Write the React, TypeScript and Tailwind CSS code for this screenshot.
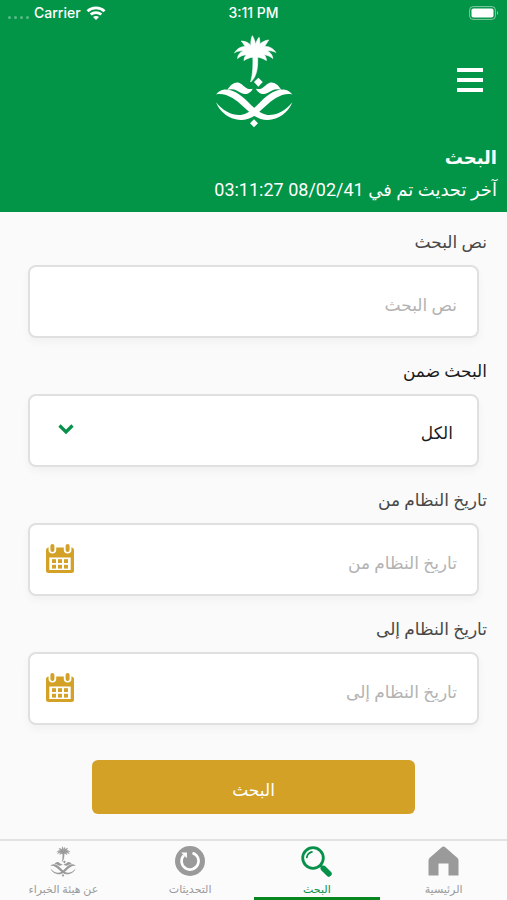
import type { ReactNode } from "react"

function Emblem({ className }: { className?: string }) {
  return (
    <svg viewBox="30 18 232 280" className={className} fill="currentColor" aria-hidden="true">
      {/* palm */}
      <g stroke="currentColor" strokeWidth="2" strokeLinejoin="round">
        <path d="M142 76 L156 76 C159 112 156 144 136 161 C143 138 144 108 142 76Z" />
        <path d="M149 86 C134 66 134 40 141 23 C150 38 156 60 149 86Z" />
        <path d="M149 86 C146 62 151 40 161 28 C167 46 162 68 149 86Z" />
        <path d="M149 84 C152 54 168 38 190 36 C182 46 174 68 149 84Z" />
        <path d="M149 84 C146 54 130 40 108 39 C117 48 124 68 149 84Z" />
        <path d="M146 80 C160 50 194 47 211 73 C196 64 172 66 152 88Z" />
        <path d="M152 80 C138 50 105 47 88 74 C103 64 126 66 147 88Z" />
        <path d="M148 74 C172 58 200 68 202 91 C190 80 172 76 150 84Z" />
        <path d="M150 74 C127 58 99 68 97 91 C108 80 127 76 149 84Z" />
        <path d="M148 72 C168 70 183 80 183 97 C174 90 162 88 148 84Z" />
        <path d="M151 72 C131 70 117 80 116 97 C125 90 137 88 151 84Z" />
      </g>
      {/* diamonds */}
      <path d="M159 148 L172 161 L159 175 L146 161Z" />
      <path d="M146 272 L158 284 L146 296 L134 284Z" />
      {/* crossed swords */}
      <path d="M33 221 C54 248 82 261 107 259 C129 256 149 237 167 218 C190 195 210 183 234 183 C246 184 255 190 260 198 C245 194 227 199 211 209 C191 221 171 244 151 259 C131 273 111 277 91 272 C62 264 42 245 33 221Z" />
      <path d="M260 221 C239 248 211 261 186 259 C164 256 144 237 126 218 C103 195 83 183 59 183 C47 184 38 190 33 198 C48 194 66 199 82 209 C102 221 122 244 142 259 C162 273 182 277 202 272 C231 264 251 245 260 221Z" />
      <path d="M66 185 C76 169 88 160 101 163 C115 168 123 187 142 181 C137 194 122 201 108 194 C95 187 85 179 66 185Z" />
      <path d="M228 185 C218 169 206 160 193 163 C179 168 171 187 152 181 C157 194 172 201 186 194 C199 187 209 179 228 185Z" />
    </svg>
  )
}

function WifiIcon() {
  return (
    <svg viewBox="0 0 20 15" className="h-[15px] w-5" fill="none" stroke="currentColor" aria-hidden="true">
      <path d="M1.500 5.200 C6.200 .8 13.800 .8 18.500 5.200" strokeWidth="2.800" />
      <path d="M4.700 8.600 C7.600 5.900 12.400 5.900 15.300 8.600" strokeWidth="2.700" />
      <path d="M10 14 L7 11 C8.700 9.500 11.300 9.500 13 11Z" fill="currentColor" stroke="none" />
    </svg>
  )
}

function BatteryIcon() {
  return (
    <svg viewBox="0 0 30 14" className="h-[14px] w-[30px]" aria-hidden="true">
      <rect x=".6" y=".6" width="25.800" height="12.800" rx="3.500" fill="none" stroke="#fff" strokeOpacity=".5" />
      <rect x="2.500" y="2.500" width="22" height="9" rx="1.800" fill="#fff" />
      <path d="M28 5 C29.600 5.700 29.600 8.300 28 9Z" fill="#fff" fillOpacity=".5" />
    </svg>
  )
}

function CalendarIcon() {
  return (
    <svg viewBox="0 0 28 29" className="h-[29px] w-7" aria-hidden="true">
      <path d="M2 3.500 H26 Q28 4 28 6 V26.500 Q28 29 25.500 29 H2.500 Q0 29 0 26.500 V6 Q0 4 2 3.500Z" fill="#d4a127" />
      <rect x="3.300" y="13.500" width="21.400" height="12.500" fill="#fff" />
      <rect x="2.600" y="-3" width="7.600" height="12.600" rx="3.800" fill="#fff" />
      <rect x="17.800" y="-3" width="7.600" height="12.600" rx="3.800" fill="#fff" />
      <rect x="4.400" y="0" width="4" height="8" rx="2" fill="#d4a127" />
      <rect x="19.600" y="0" width="4" height="8" rx="2" fill="#d4a127" />
      <g fill="#d4a127">
        <rect x="6" y="15.200" width="4" height="3.800" />
        <rect x="12" y="15.200" width="4" height="3.800" />
        <rect x="18" y="15.200" width="4" height="3.800" />
        <rect x="6" y="20.800" width="4" height="3.800" />
        <rect x="12" y="20.800" width="4" height="3.800" />
        <rect x="18" y="20.800" width="4" height="3.800" />
      </g>
    </svg>
  )
}

function HomeIcon() {
  return (
    <svg viewBox="0 0 31 30" className="h-[30px] w-[31px]" fill="currentColor" aria-hidden="true">
      <path d="M15.500 .5 Q16.500 .5 17.500 1.500 L29.500 12 Q30.500 13 30.500 14.500 V29.500 H20.500 V17.500 H10.500 V29.500 H.5 V14.500 Q.5 13 1.500 12 L13.500 1.500 Q14.500 .5 15.500 .5Z" />
    </svg>
  )
}

function SearchIcon() {
  return (
    <svg viewBox="0 0 31 31" className="h-[31px] w-[31px]" fill="none" stroke="currentColor" aria-hidden="true">
      <circle cx="12" cy="12" r="10.300" strokeWidth="2.800" />
      <path d="M5.800 11.500 Q6.500 7 11 5.900" strokeWidth="1.700" strokeLinecap="round" />
      <path d="M19 19 L22 22" strokeWidth="2.500" />
      <path d="M22.500 22.500 L27.800 27.800" strokeWidth="5.800" strokeLinecap="round" />
    </svg>
  )
}

function UpdatesIcon() {
  return (
    <svg viewBox="0 0 30 30" className="h-[30px] w-[30px]" aria-hidden="true">
      <circle cx="15" cy="15" r="15" fill="currentColor" />
      <path d="M17.500 6.900 A8.500 8.500 0 1 1 8.800 9.300" fill="none" stroke="#fff" strokeWidth="2.600" />
      <path d="M6.200 6.600 L12 6.400 L11.800 12.200Z" fill="#fff" />
    </svg>
  )
}

const fieldBox =
  "flex h-[73px] w-full items-center rounded-lg border-2 border-[#e0e0e0] bg-white shadow-[0_4px_8px_rgba(0,0,0,0.04)]"

function Field({ id, label, strong, children }: { id: string; label: string; strong?: boolean; children: ReactNode }) {
  return (
    <div className="h-[129px] pt-4">
      <label
        htmlFor={id}
        className={`-mr-2 block h-[37px] text-[17px] leading-7 ${strong ? "text-[#1c1c1c]" : "text-[#484848]"}`}
      >
        {label}
      </label>
      <div className={fieldBox}>{children}</div>
    </div>
  )
}

function DateField({ id, label }: { id: string; label: string }) {
  return (
    <Field id={id} label={label}>
      <input
        id={id}
        type="text"
        placeholder={label}
        className="h-full min-w-0 flex-1 bg-transparent pt-1.5 pr-5 text-[17px] outline-none placeholder:text-[#b3b3b3]"
      />
      <button type="button" aria-label={label} className="px-4 pb-0.5">
        <CalendarIcon />
      </button>
    </Field>
  )
}

const tabs = [
  { label: "الرئيسية", icon: <HomeIcon /> },
  { label: "البحث", icon: <SearchIcon />, active: true },
  { label: "التحديثات", icon: <UpdatesIcon /> },
  { label: "عن هيئة الخبراء", icon: <Emblem className="h-[31px] w-[26px]" /> },
]

export default function App() {
  return (
    <div
      dir="rtl"
      className="flex min-h-screen flex-col bg-[#fafafa] font-['Roboto','DejaVu_Sans',sans-serif]"
    >
      <header className="bg-[#029447] pb-2 text-white">
        <div dir="ltr" className="grid h-[26px] grid-cols-3 items-center px-2 font-['Inter',sans-serif] text-sm font-medium">
          <div className="flex items-center gap-[5px]">
            <div className="flex gap-[3px] pt-2 opacity-35">
              <span className="size-[3px] rounded-full bg-white" />
              <span className="size-[3px] rounded-full bg-white" />
              <span className="size-[3px] rounded-full bg-white" />
              <span className="size-[3px] rounded-full bg-white" />
            </div>
            <span>Carrier</span>
            <WifiIcon />
          </div>
          <div className="text-center">3:11 PM</div>
          <div className="flex justify-end">
            <BatteryIcon />
          </div>
        </div>

        <div className="grid h-[118px] grid-cols-3 items-start px-6 pt-2">
          <button type="button" aria-label="القائمة" className="mt-[34px] flex w-[26px] flex-col gap-1.5">
            <span className="h-1 w-full bg-white" />
            <span className="h-1 w-full bg-white" />
            <span className="h-1 w-full bg-white" />
          </button>
          <Emblem className="h-[94px] w-[78px] justify-self-center" />
        </div>

        <div className="px-[10px]">
          <h1 className="text-lg leading-7 font-bold">البحث</h1>
          <p className="pt-1 text-lg leading-7">آخر تحديث تم في 08/02/41 03:11:27</p>
        </div>
      </header>

      <main className="flex-1 px-7">
        <form onSubmit={(e) => e.preventDefault()}>
          <Field id="query" label="نص البحث">
            <input
              id="query"
              type="text"
              placeholder="نص البحث"
              className="h-full min-w-0 flex-1 bg-transparent px-5 pt-1.5 text-[17px] outline-none placeholder:text-[#b3b3b3]"
            />
          </Field>
          <Field id="scope" label="البحث ضمن" strong>
            <div className="relative h-full flex-1">
              <select
                id="scope"
                className="h-full w-full appearance-none bg-transparent px-6 pt-1.5 text-[17px] text-[#1c1c1c] outline-none"
              >
                <option>الكل</option>
              </select>
              <svg
                viewBox="0 0 16 11"
                className="pointer-events-none absolute top-7 left-7 h-[11px] w-4"
                fill="none"
                stroke="#079049"
                strokeWidth="3.200"
                aria-hidden="true"
              >
                <path d="M1.500 1.500 L8 8 L14.500 1.500" />
              </svg>
            </div>
          </Field>
          <DateField id="date-from" label="تاريخ النظام من" />
          <DateField id="date-to" label="تاريخ النظام إلى" />
          <button
            type="submit"
            className="mx-auto mt-8 block h-[54px] w-5/7 rounded-md bg-[#d4a127] pt-2 text-[17px] text-white"
          >
            البحث
          </button>
        </form>
      </main>

      <nav className="grid h-[61px] grid-cols-4 border-t-2 border-[#e2e2e2] bg-[#fbfbfb]">
        {tabs.map((tab) => (
          <a
            key={tab.label}
            href="#"
            className={`flex h-full flex-col items-center border-b-[3px] pt-1 text-[11px] whitespace-nowrap ${
              tab.active ? "border-[#07861f] text-[#079049]" : "border-transparent text-[#9a9a9a]"
            }`}
          >
            <span className="flex h-8 items-center">{tab.icon}</span>
            <span className="pt-1.5 leading-[14px]">{tab.label}</span>
          </a>
        ))}
      </nav>
    </div>
  )
}
